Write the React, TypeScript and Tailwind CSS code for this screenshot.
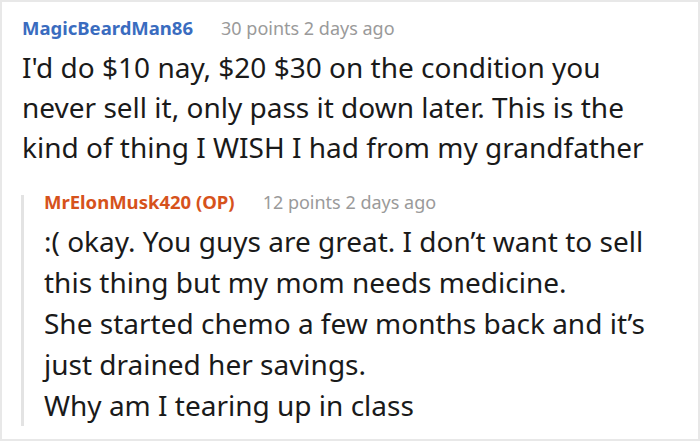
import React from "react";

export default function App() {
  return (
    <div
      className="w-[700px] h-[441px] bg-white border-2 border-[#e8e8e8] overflow-hidden text-[#1a1a1a]"
      style={{ fontFamily: '"Noto Sans", "Open Sans", sans-serif' }}
    >
      <div className="pl-[20px] pt-[13px]">
        <div className="flex items-baseline h-[26px] leading-[26px]">
          <span className="text-[18.5px] font-bold text-[#3a6cbf]">MagicBeardMan86</span>
          <span className="ml-[28px] text-[18px] text-[#9a9a9a]">30 points 2 days ago</span>
        </div>
        <p className="text-[28px] leading-[40px] mt-[6px] whitespace-nowrap">
          I'd do $10 nay, $20 $30 on the condition you
          <br />
          never sell it, only pass it down later. This is the
          <br />
          kind of thing I WISH I had from my grandfather
        </p>
        <div className="mt-[28px] border-l-[3px] border-[#e3e3e3] pl-[20px] -ml-[1px]">
          <div className="flex items-baseline h-[14px] leading-[14px]">
            <span className="text-[18.5px] font-bold text-[#d6521c]">MrElonMusk420 (OP)</span>
            <span className="ml-[28px] text-[18px] text-[#9a9a9a]">12 points 2 days ago</span>
          </div>
          <p className="text-[28px] leading-[41px] mt-[12px] whitespace-nowrap">
            :( okay. You guys are great. I don’t want to sell
            <br />
            this thing but my mom needs medicine.
            <br />
            She started chemo a few months back and it’s
            <br />
            just drained her savings.
            <br />
            Why am I tearing up in class
          </p>
        </div>
      </div>
    </div>
  );
}
